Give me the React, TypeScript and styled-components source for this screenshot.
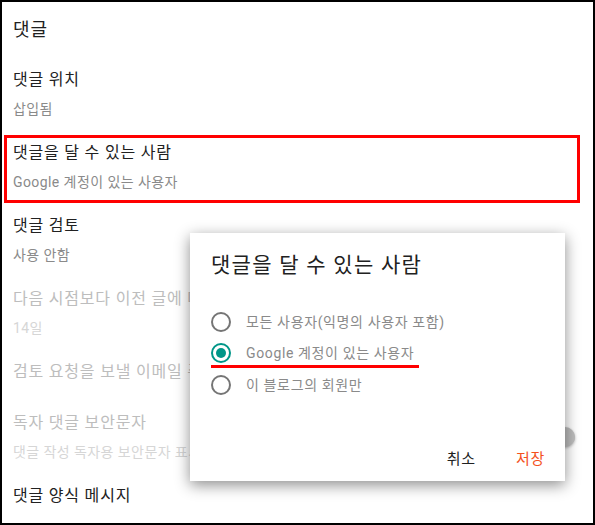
import styled, { createGlobalStyle } from "styled-components";

const GlobalStyle = createGlobalStyle`
  html, body {
    margin: 0;
    padding: 0;
    background: #ffffff;
  }
  body {
    font-family: Roboto, "Noto Sans CJK KR", sans-serif;
  }
`;

type Setting = {
  title: string;
  value?: string;
  disabled?: boolean;
  highlight?: boolean;
  toggle?: boolean;
};

const settings: Setting[] = [
  { title: "댓글 위치", value: "삽입됨" },
  { title: "댓글을 달 수 있는 사람", value: "Google 계정이 있는 사용자", highlight: true },
  { title: "댓글 검토", value: "사용 안함" },
  { title: "다음 시점보다 이전 글에 대한 댓글 검토", value: "14일", disabled: true },
  { title: "검토 요청을 보낼 이메일 주소", disabled: true },
  { title: "독자 댓글 보안문자", value: "댓글 작성 독자용 보안문자 표시", disabled: true, toggle: true },
  { title: "댓글 양식 메시지" },
];

const options = [
  { label: "모든 사용자(익명의 사용자 포함)", checked: false },
  { label: "Google 계정이 있는 사용자", checked: true, marked: true },
  { label: "이 블로그의 회원만", checked: false },
];

const App = () => {
  return (
    <>
      <GlobalStyle />
      <Frame>
        <Heading>댓글</Heading>
        <SettingList>
          {settings.map((s) => (
            <SettingRow key={s.title} $highlight={s.highlight} $single={!s.value}>
              <SettingText>
                <SettingTitle $disabled={s.disabled}>{s.title}</SettingTitle>
                {s.value && <SettingValue $disabled={s.disabled}>{s.value}</SettingValue>}
              </SettingText>
              {s.toggle && <Switch />}
            </SettingRow>
          ))}
        </SettingList>

        <Dialog>
          <DialogTitle>댓글을 달 수 있는 사람</DialogTitle>
          <OptionList>
            {options.map((o) => (
              <Option key={o.label} $marked={o.marked}>
                <Radio $checked={o.checked} />
                <OptionLabel>{o.label}</OptionLabel>
              </Option>
            ))}
          </OptionList>
          <DialogFooter>
            <TextButton>취소</TextButton>
            <TextButton $primary>저장</TextButton>
          </DialogFooter>
        </Dialog>
      </Frame>
    </>
  );
};

export default App;

const Frame = styled.div`
  position: relative;
  width: 595px;
  height: 525px;
  box-sizing: border-box;
  border: 2px solid #000000;
  background: #ffffff;
  overflow: hidden;
`;

const Heading = styled.div`
  padding: 16px 0 0 11px;
  font-size: 18px;
  line-height: 24px;
  letter-spacing: 0.05em;
  color: #212121;
`;

const SettingList = styled.div`
  display: flex;
  flex-direction: column;
  gap: 5px;
  margin-top: 20px;
  padding: 0 13px 0 2px;
`;

const SettingRow = styled.div<{ $highlight?: boolean; $single?: boolean }>`
  display: flex;
  align-items: center;
  justify-content: space-between;
  padding: 4px 2px ${(p) => (p.$single ? "14px" : "8px")} 6px;
  border: 3px solid ${(p) => (p.$highlight ? "#ff0000" : "transparent")};
`;

const SettingText = styled.div`
  display: flex;
  flex-direction: column;
  gap: 8px;
  min-width: 0;
`;

const SettingTitle = styled.div<{ $disabled?: boolean }>`
  font-size: 16px;
  line-height: 22px;
  letter-spacing: 0.05em;
  color: ${(p) => (p.$disabled ? "#bdbdbd" : "#212121")};
  white-space: nowrap;
`;

const SettingValue = styled.div<{ $disabled?: boolean }>`
  font-size: 14px;
  line-height: 20px;
  letter-spacing: 0.03em;
  color: ${(p) => (p.$disabled ? "#d6d6d6" : "#8a8a8a")};
  white-space: nowrap;
`;

const Switch = styled.div`
  position: relative;
  flex: none;
  width: 36px;
  height: 14px;
  border-radius: 7px;
  background: #e0e0e0;

  &::after {
    content: "";
    position: absolute;
    right: 0;
    top: -3px;
    width: 20px;
    height: 20px;
    border-radius: 50%;
    background: #bdbdbd;
    box-shadow: 0 1px 3px rgba(0, 0, 0, 0.3);
  }
`;

const Dialog = styled.div`
  position: absolute;
  left: 188px;
  top: 231px;
  width: 375px;
  height: 248px;
  box-sizing: border-box;
  display: flex;
  flex-direction: column;
  padding: 18px 0 6px 21px;
  background: #ffffff;
  box-shadow: 0 4px 14px rgba(0, 0, 0, 0.45);
`;

const DialogTitle = styled.div`
  font-size: 21px;
  line-height: 28px;
  letter-spacing: 0.06em;
  color: #212121;
`;

const OptionList = styled.div`
  display: flex;
  flex-direction: column;
  margin-top: 27px;
`;

const Option = styled.div<{ $marked?: boolean }>`
  position: relative;
  display: flex;
  align-items: center;
  gap: 15px;
  width: fit-content;
  height: 31.5px;

  &::after {
    content: "";
    display: ${(p) => (p.$marked ? "block" : "none")};
    position: absolute;
    left: 0;
    right: -5px;
    bottom: 1px;
    height: 3px;
    background: #ff0000;
  }
`;

const Radio = styled.span<{ $checked?: boolean }>`
  position: relative;
  flex: none;
  width: 20px;
  height: 20px;
  box-sizing: border-box;
  border-radius: 50%;
  border: 2px solid ${(p) => (p.$checked ? "#009688" : "#757575")};

  &::after {
    content: "";
    display: ${(p) => (p.$checked ? "block" : "none")};
    position: absolute;
    left: 3px;
    top: 3px;
    width: 10px;
    height: 10px;
    border-radius: 50%;
    background: #009688;
  }
`;

const OptionLabel = styled.span`
  font-size: 14px;
  line-height: 20px;
  letter-spacing: 0.045em;
  color: #8a8a8a;
  white-space: nowrap;
`;

const DialogFooter = styled.div`
  display: flex;
  justify-content: flex-end;
  gap: 24px;
  margin-top: auto;
  padding-right: 12px;
`;

const TextButton = styled.button<{ $primary?: boolean }>`
  border: none;
  background: none;
  padding: 6px 8px;
  font-family: inherit;
  font-size: 15px;
  line-height: 20px;
  letter-spacing: 0.05em;
  color: ${(p) => (p.$primary ? "#f4511e" : "#212121")};
  cursor: pointer;
`;
